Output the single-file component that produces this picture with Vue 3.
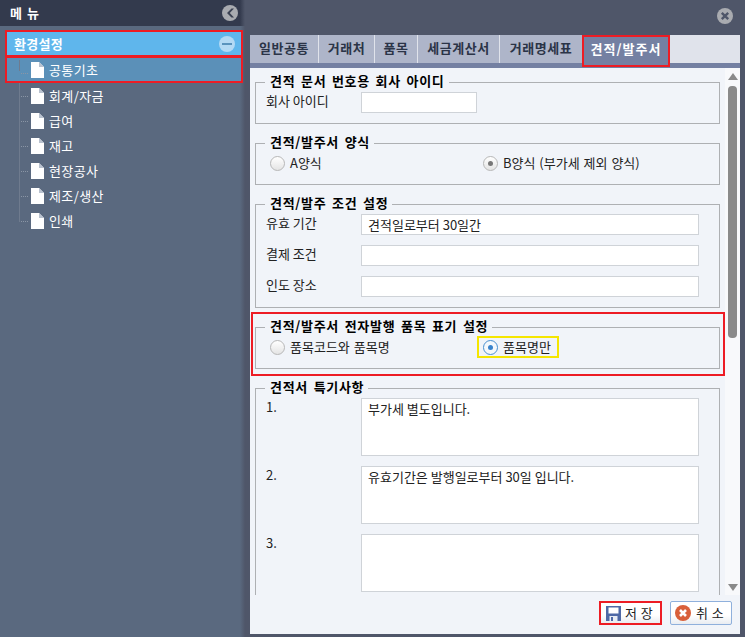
<script setup>
const menu = ['회계/자금', '급여', '재고', '현장공사', '제조/생산', '인쇄']
const tabs = [
  { t: '일반공통', w: 68 }, { t: '거래처', w: 55 }, { t: '품목', w: 42 },
  { t: '세금계산서', w: 81 }, { t: '거래명세표', w: 82 }, { t: '견적/발주서', w: 88, active: true }
]
const terms = [
  { l: '유효 기간', v: '견적일로부터 30일간' }, { l: '결제 조건', v: '' }, { l: '인도 장소', v: '' }
]
const notes = [
  { l: '1.', v: '부가세 별도입니다.' }, { l: '2.', v: '유효기간은 발행일로부터 30일 입니다.' }, { l: '3.', v: '' }
]
</script>

<template>
  <div class="app">
    <aside class="side">
      <header class="side-head">
        <span class="side-title">메 뉴</span>
        <svg width="18" height="18" viewBox="0 0 18 18"><circle cx="9" cy="9" r="8" fill="#a9abb0"/><path d="M10.5 4.500 6 9l4.500 4.500h2.500L8.800 9 13 4.500z" fill="#3a4152"/></svg>
      </header>
      <div class="group-row">
        <span>환경설정</span>
        <svg width="16" height="16" viewBox="0 0 16 16"><circle cx="8" cy="8" r="8" fill="#b3d9f4"/><rect x="3" y="7" width="10" height="2" fill="#5a93bd"/></svg>
      </div>
      <div class="item item-on">
        <i class="tree first"></i>
        <svg class="doc" width="13" height="16" viewBox="0 0 13 16"><path d="M0 0h8l5 5v11H0z" fill="#fff"/><path d="M8 0v5h5" fill="#b9c2cf"/></svg>
        <span>공통기초</span>
      </div>
      <div v-for="(m, i) in menu" :key="m" class="item">
        <i class="tree" :class="{ last: i === menu.length - 1 }"></i>
        <svg class="doc" width="13" height="16" viewBox="0 0 13 16"><path d="M0 0h8l5 5v11H0z" fill="#fff"/><path d="M8 0v5h5" fill="#b9c2cf"/></svg>
        <span>{{ m }}</span>
      </div>
    </aside>

    <main class="main">
      <div class="main-top">
        <svg width="16" height="16" viewBox="0 0 16 16"><circle cx="8" cy="8" r="8" fill="#a9abb0"/><path d="M4.800 4.800l6.400 6.400M11.200 4.800l-6.400 6.400" stroke="#4f5669" stroke-width="2.400"/></svg>
      </div>
      <section class="panel">
        <nav class="tabs">
          <div v-for="t in tabs" :key="t.t" class="tab" :class="{ active: t.active }" :style="{ width: t.w + 'px' }">{{ t.t }}</div>
        </nav>
        <div class="body">
          <div class="scroll">
            <fieldset class="fs">
              <legend>견적 문서 번호용 회사 아이디</legend>
              <div class="row"><label>회사 아이디</label><div class="input short"></div></div>
            </fieldset>
            <fieldset class="fs gap">
              <legend>견적/발주서 양식</legend>
              <div class="radios">
                <div class="radio"><i class="dot"></i>A양식</div>
                <div class="radio"><i class="dot gray"></i>B양식 (부가세 제외 양식)</div>
              </div>
            </fieldset>
            <fieldset class="fs gap fs3">
              <legend>견적/발주 조건 설정</legend>
              <div v-for="r in terms" :key="r.l" class="row"><label>{{ r.l }}</label><div class="input">{{ r.v }}</div></div>
            </fieldset>
            <div class="mark">
              <fieldset class="fs">
                <legend>견적/발주서 전자발행 품목 표기 설정</legend>
                <div class="radios">
                  <div class="radio"><i class="dot"></i>품목코드와 품목명</div>
                  <div class="radio picked"><i class="dot blue"></i>품목명만</div>
                </div>
              </fieldset>
            </div>
            <fieldset class="fs fs5">
              <legend>견적서 특기사항</legend>
              <div v-for="r in notes" :key="r.l" class="row tall"><label>{{ r.l }}</label><div class="input area">{{ r.v }}</div></div>
            </fieldset>
          </div>
          <div class="sbar">
            <i class="up"></i>
            <i class="thumb"></i>
            <i class="down"></i>
          </div>
        </div>
        <footer class="foot">
          <div class="btn save">
            <svg width="15" height="15" viewBox="0 0 15 15"><path d="M0 0h15v15H0z" fill="#4f69a6"/><path d="M2.500 1.500h10v6h-10z" fill="#fff"/><path d="M3.500 10h8v5h-8z" fill="#e8ecf4"/><path d="M5 11h2v4H5z" fill="#4f69a6"/></svg>
            <span>저 장</span>
          </div>
          <div class="btn cancel">
            <svg width="16" height="16" viewBox="0 0 16 16"><circle cx="8" cy="8" r="8" fill="#d9603a"/><path d="M5 5l6 6M11 5l-6 6" stroke="#fff" stroke-width="2.600"/></svg>
            <span>취 소</span>
          </div>
        </footer>
      </section>
    </main>
  </div>
</template>

<style>
html, body { margin: 0; background: #4f5669; }
</style>

<style scoped>
.app {
  width: 745px; height: 637px; display: flex; overflow: hidden; background: #4f5669;
  font: 13px/16px "Noto Sans CJK KR", "Liberation Sans", sans-serif; color: #222;
}
.side {
  width: 245px; flex: none; background: linear-gradient(to right, #5a697f 0, #5a697f 240px, #4f5669 245px);
  display: flex; flex-direction: column; align-items: stretch;
}
.side-head {
  height: 26px; background: linear-gradient(to right, #333a4d 0, #333a4d 240px, #4f5669 245px); display: flex; align-items: center; justify-content: space-between;
  padding: 0 6px 0 10px; margin-bottom: 4px;
}
.side-title { color: #fff; font-weight: 700; letter-spacing: 1px; }
.group-row {
  margin: 0 2px 0 5px; height: 27px; box-sizing: border-box; border: 2px solid #ed1c24; background: #5fb6ec;
  display: flex; align-items: center; justify-content: space-between; padding: 0 6px 0 7px;
  color: #fff; font-weight: 700; letter-spacing: 0.3px;
}
.item {
  height: 25px; margin: 0 2px 0 5px; display: flex; align-items: center; color: #fff; position: relative;
  padding-left: 26px; letter-spacing: 0.4px;
}
.item-on {
  height: 26px; background: #5b90b8; border: 2px solid #ed1c24; border-top-width: 1px; box-sizing: border-box;
  padding-left: 24px;
}
.doc { margin-right: 5px; flex: none; }
.tree {
  position: absolute; left: 14px; top: 0; bottom: 0; width: 9px; border-left: 1px solid #6f7b8e;
}
.tree::after {
  content: ""; position: absolute; left: 1px; top: 13px; width: 7px; border-top: 1px dotted #8a95a5;
}
.tree.last { bottom: 11px; }
.item-on .tree { left: 12px; top: 2px; bottom: 10px; }

.main { flex: 1; min-width: 0; display: flex; flex-direction: column; padding: 0 5px 3px 5px; }
.main-top { height: 35px; display: flex; justify-content: flex-end; align-items: flex-start; padding: 8px 7px 0 0; box-sizing: border-box; }
.panel { flex: 1; min-height: 0; background: #f1f4f9; display: flex; flex-direction: column; }
.tabs { height: 28px; background: #e0e3eb; border-bottom: 5px solid #7480a2; display: flex; flex: none; }
.tab {
  box-sizing: border-box; margin-right: 1px; background: #aeb5c9; color: #2b3447; font-weight: 700; padding-bottom: 2px;
  display: flex; align-items: center; justify-content: center; letter-spacing: 0.5px; flex: none;
}
.tab.active { background: #7480a2; color: #fff; border: 2px solid #ed1c24; height: 32px; margin-left: -1px; margin-right: 0; padding-bottom: 4px; letter-spacing: 1px; position: relative; z-index: 1; }
.body { flex: 1; min-height: 0; display: flex; }
.scroll { flex: 1; min-width: 0; overflow: hidden; padding: 8px 5px 0 5px; }
.sbar { width: 15px; flex: none; background: #f8f9fb; display: flex; flex-direction: column; align-items: center; }
.up { margin-top: 5px; border: solid transparent; border-width: 0 5px 7px; border-bottom-color: #8a8a8a; }
.thumb { width: 9px; height: 252px; margin-top: 6px; background: #8a8a8a; border-radius: 4px; }
.down { margin-top: 246px; border: solid transparent; border-width: 7px 5px 0; border-top-color: #8a8a8a; }

.fs { margin: 0; padding: 0 0 0 10px; border: 1px solid #aeb0b3; min-inline-size: 0; box-sizing: border-box; height: 48px; }
legend { padding: 0 4px 0 5px; margin-left: -1px; font-weight: 700; color: #000; letter-spacing: 0.7px; word-spacing: 2px; line-height: 10px; height: 13px; box-sizing: border-box; }
.gap { margin-top: 13px; }
.fs3 { height: 110px; }
.mark { margin: 4px -5px 0 -4px; padding: 7px 3px 5px 2px; border: 2px solid #ed1c24; }
.fs5 { margin-top: 6px; height: 260px; }
.row { display: grid; grid-template-columns: 95px 338px; height: 31px; align-items: start; padding-top: 3px; box-sizing: border-box; }
.row:has(.short) { grid-template-columns: 95px 116px; }
label { line-height: 18px; }
.input { height: 21px; box-sizing: border-box; border: 1px solid #cfd3d8; background: #fff; padding-left: 6px; line-height: 19px; white-space: nowrap; }
.row.tall { height: 68px; }
.area { height: 58px; }
.radios { display: flex; padding-left: 4px; padding-top: 3px; }
.radio { display: flex; align-items: center; gap: 5px; height: 20px; width: 213px; flex: none; white-space: nowrap; word-spacing: 1px; padding-bottom: 1px; box-sizing: border-box; }
.dot { margin-bottom: -1px; }
.radio.picked { width: 80px; box-sizing: border-box; outline: 2px solid #f5e600; outline-offset: -1px; padding-left: 5px; margin-left: -5px; }
.dot { width: 15px; height: 15px; box-sizing: border-box; border-radius: 50%; border: 1px solid #b7b7b7; background: linear-gradient(#fff, #e4e4e4); position: relative; flex: none; }
.dot.gray::after, .dot.blue::after { content: ""; position: absolute; left: 4px; top: 4px; width: 5px; height: 5px; border-radius: 50%; background: #777; }
.dot.blue { border-color: #4a90d0; background: #f4f8fc; }
.dot.blue::after { background: #3a83cc; }

.foot { flex: none; height: 39px; display: flex; justify-content: flex-end; align-items: flex-start; gap: 8px; padding: 6px 8px 0 0; box-sizing: border-box; }
.btn { height: 24px; box-sizing: border-box; display: flex; align-items: center; gap: 5px; background: linear-gradient(#fff 60%, #e9ecf1); color: #222; padding-left: 4px; white-space: nowrap; }
.btn span { letter-spacing: 0.4px; }
.save { width: 63px; border: 2px solid #ed1c24; gap: 4px; padding-left: 5px; }
.cancel { width: 62px; border: 1px solid #8fb0dc; border-radius: 2px; }
</style>
